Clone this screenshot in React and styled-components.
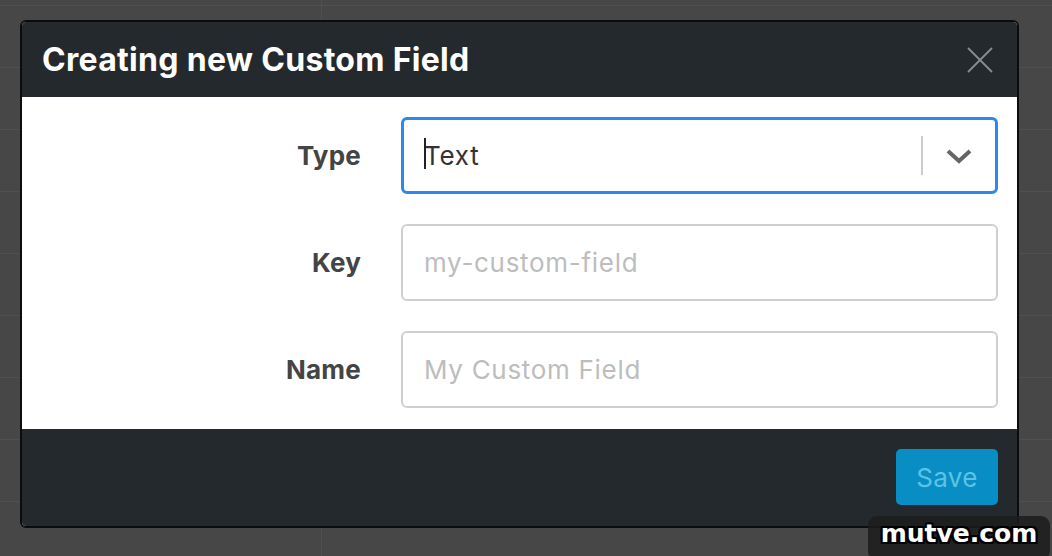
import styled, { createGlobalStyle } from 'styled-components';

const GlobalStyle = createGlobalStyle`
  html, body {
    margin: 0;
    padding: 0;
    height: 100%;
  }
  body {
    background-color: #484848;
    font-family: Inter, "Noto Sans", "Liberation Sans", sans-serif;
    overflow: hidden;
  }
`;

const Page = styled.div`
  position: relative;
  width: 1052px;
  height: 556px;
  padding: 20px 0 0 20px;
  box-sizing: border-box;
  background-color: #474747;
  background-image:
    linear-gradient(90deg, transparent 321px, #4f4f4f 321px, #4f4f4f 322px, transparent 322px),
    repeating-linear-gradient(180deg, transparent 0, transparent 5px, #505050 5px, #505050 6px, transparent 6px, transparent 62px);
`;

const Modal = styled.div`
  width: 999px;
  border: 2px solid #0b0c0d;
  border-radius: 6px;
  overflow: hidden;
  box-sizing: border-box;
  background: #fff;
  display: flex;
  flex-direction: column;
`;

const Header = styled.div`
  height: 75px;
  background: #24292d;
  display: flex;
  align-items: center;
  justify-content: space-between;
  padding: 0 24px 0 20px;
`;

const Title = styled.h2`
  margin: 0;
  font-size: 32px;
  font-weight: 700;
  color: #fff;
  letter-spacing: 0.3px;
`;

const CloseButton = styled.button`
  background: none;
  border: none;
  padding: 0;
  width: 26px;
  height: 26px;
  display: flex;
  align-items: center;
  justify-content: center;
  cursor: pointer;
`;

const Body = styled.div`
  padding: 20px 19px 21px 0;
  display: grid;
  grid-template-columns: 339px 1fr;
  column-gap: 40px;
  row-gap: 30px;
  align-items: center;
`;

const Label = styled.label`
  text-align: right;
  font-size: 26px;
  font-weight: 700;
  color: #444;
  letter-spacing: 0.2px;
`;

const Field = styled.div`
  height: 77px;
  box-sizing: border-box;
  border: ${(p) => (p.$focused ? '3px solid #2d87f0' : '2px solid #cfcfcf')};
  border-radius: 6px;
  display: flex;
  align-items: center;
  padding-left: ${(p) => (p.$focused ? '20px' : '21px')};
  font-size: 26px;
  letter-spacing: 0.7px;
  color: ${(p) => (p.$placeholder ? '#bdbdbd' : '#333')};
`;

const Value = styled.span`
  flex: 1;
  position: relative;
`;

const Caret = styled.span`
  position: absolute;
  left: 0;
  top: -2px;
  width: 1.5px;
  height: 31px;
  background: #222;
`;

const Indicator = styled.div`
  display: flex;
  align-items: center;
  height: 100%;
`;

const Separator = styled.span`
  width: 2px;
  height: 39px;
  background: #cccccc;
`;

const Chevron = styled.span`
  width: 72px;
  display: flex;
  justify-content: center;
`;

const Footer = styled.div`
  height: 97px;
  background: #24292d;
  display: flex;
  align-items: flex-start;
  justify-content: flex-end;
  padding: 20px 19px 0 0;
  box-sizing: border-box;
`;

const SaveButton = styled.button`
  width: 102px;
  height: 56px;
  border: none;
  border-radius: 5px;
  background: #088ec5;
  color: #5cc3e6;
  font-family: inherit;
  font-size: 26px;
  letter-spacing: 0.3px;
  cursor: default;
`;

const Watermark = styled.div`
  position: absolute;
  left: 868px;
  top: 516px;
  width: 182px;
  height: 44px;
  border-radius: 9px;
  background: rgba(28, 28, 28, 0.85);
  display: flex;
  justify-content: center;
  padding-top: 3px;
  box-sizing: border-box;
  font-family: "DejaVu Sans", sans-serif;
  font-weight: 700;
  font-size: 25px;
  color: #fff;
  text-shadow: -2px 0 #000, 2px 0 #000, 0 -2px #000, 0 2px #000, 2px 2px #000, -2px -2px #000, 2px -2px #000, -2px 2px #000;
`;

const App = () => {
  return (
    <>
      <GlobalStyle />
      <Page>
        <Modal>
          <Header>
            <Title>Creating new Custom Field</Title>
            <CloseButton aria-label="Close">
              <svg width="26" height="26" viewBox="0 0 26 26">
                <path d="M1 1 L25 25 M25 1 L1 25" stroke="#8a8d90" strokeWidth="1.8" />
              </svg>
            </CloseButton>
          </Header>
          <Body>
            <Label>Type</Label>
            <Field $focused>
              <Value>
                <Caret />
                Text
              </Value>
              <Indicator>
                <Separator />
                <Chevron>
                  <svg width="26" height="16" viewBox="0 0 26 16">
                    <polyline points="2,3 13,13 24,3" fill="none" stroke="#666" strokeWidth="4" />
                  </svg>
                </Chevron>
              </Indicator>
            </Field>
            <Label>Key</Label>
            <Field $placeholder>my-custom-field</Field>
            <Label>Name</Label>
            <Field $placeholder>My Custom Field</Field>
          </Body>
          <Footer>
            <SaveButton>Save</SaveButton>
          </Footer>
        </Modal>
        <Watermark>mutve.com</Watermark>
      </Page>
    </>
  );
};

export default App;
